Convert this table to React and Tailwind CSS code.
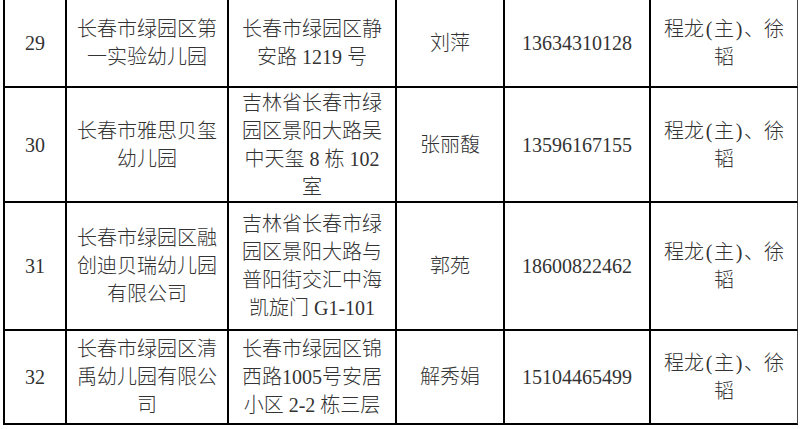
import React from "react";

const rows = [
  {
    n: "29",
    name: ["长春市绿园区第", "一实验幼儿园"],
    addr: ["长春市绿园区静", "安路 1219 号"],
    person: "刘萍",
    phone: "13634310128",
    h: "h-[88px]",
  },
  {
    n: "30",
    name: ["长春市雅思贝玺", "幼儿园"],
    addr: ["吉林省长春市绿", "园区景阳大路吴", "中天玺 8 栋 102", "室"],
    person: "张丽馥",
    phone: "13596167155",
    h: "h-[115px]",
  },
  {
    n: "31",
    name: ["长春市绿园区融", "创迪贝瑞幼儿园", "有限公司"],
    addr: ["吉林省长春市绿", "园区景阳大路与", "普阳街交汇中海", "凯旋门 G1-101"],
    person: "郭苑",
    phone: "18600822462",
    h: "h-[128px]",
  },
  {
    n: "32",
    name: ["长春市绿园区清", "禹幼儿园有限公", "司"],
    addr: ["长春市绿园区锦", "西路1005号安居", "小区 2-2 栋三层"],
    person: "解秀娟",
    phone: "15104465499",
    h: "h-[94px]",
  },
];

const Leader = (
  <>
    程龙<span className="inline-block w-[10px] text-center">(</span>主
    <span className="inline-block w-[10px] text-center">)</span>、徐
  </>
);

function Cell({ lines, w, last }) {
  const arr = Array.isArray(lines) ? lines : [lines];
  return (
    <div
      className={`${w} shrink-0 flex flex-col items-center justify-center text-center border-b-2 border-black ${
        last ? "border-r border-r-[#444]" : "border-r-2"
      }`}
    >
      {arr.map((l, i) => (
        <div key={i} className="whitespace-nowrap leading-[28px]">
          {l}
        </div>
      ))}
    </div>
  );
}

export default function App() {
  return (
    <div
      className="w-[800px] h-[429px] bg-white overflow-hidden text-[20px] font-light text-[#333333]"
      style={{ fontFamily: '"Liberation Serif", "Noto Sans CJK SC", serif' }}
    >
      <div className="ml-[3px] w-[795px] border-l-2 border-black flex flex-col">
        {rows.map((r) => (
          <div key={r.n} className={`flex ${r.h}`}>
            <Cell lines={r.n} w="w-[62px]" />
            <Cell lines={r.name} w="w-[162px]" />
            <Cell lines={r.addr} w="w-[168px]" />
            <Cell lines={r.person} w="w-[108px]" />
            <Cell lines={r.phone} w="w-[146px]" />
            <Cell lines={[Leader, "韬"]} w="w-[147px]" last />
          </div>
        ))}
      </div>
    </div>
  );
}
